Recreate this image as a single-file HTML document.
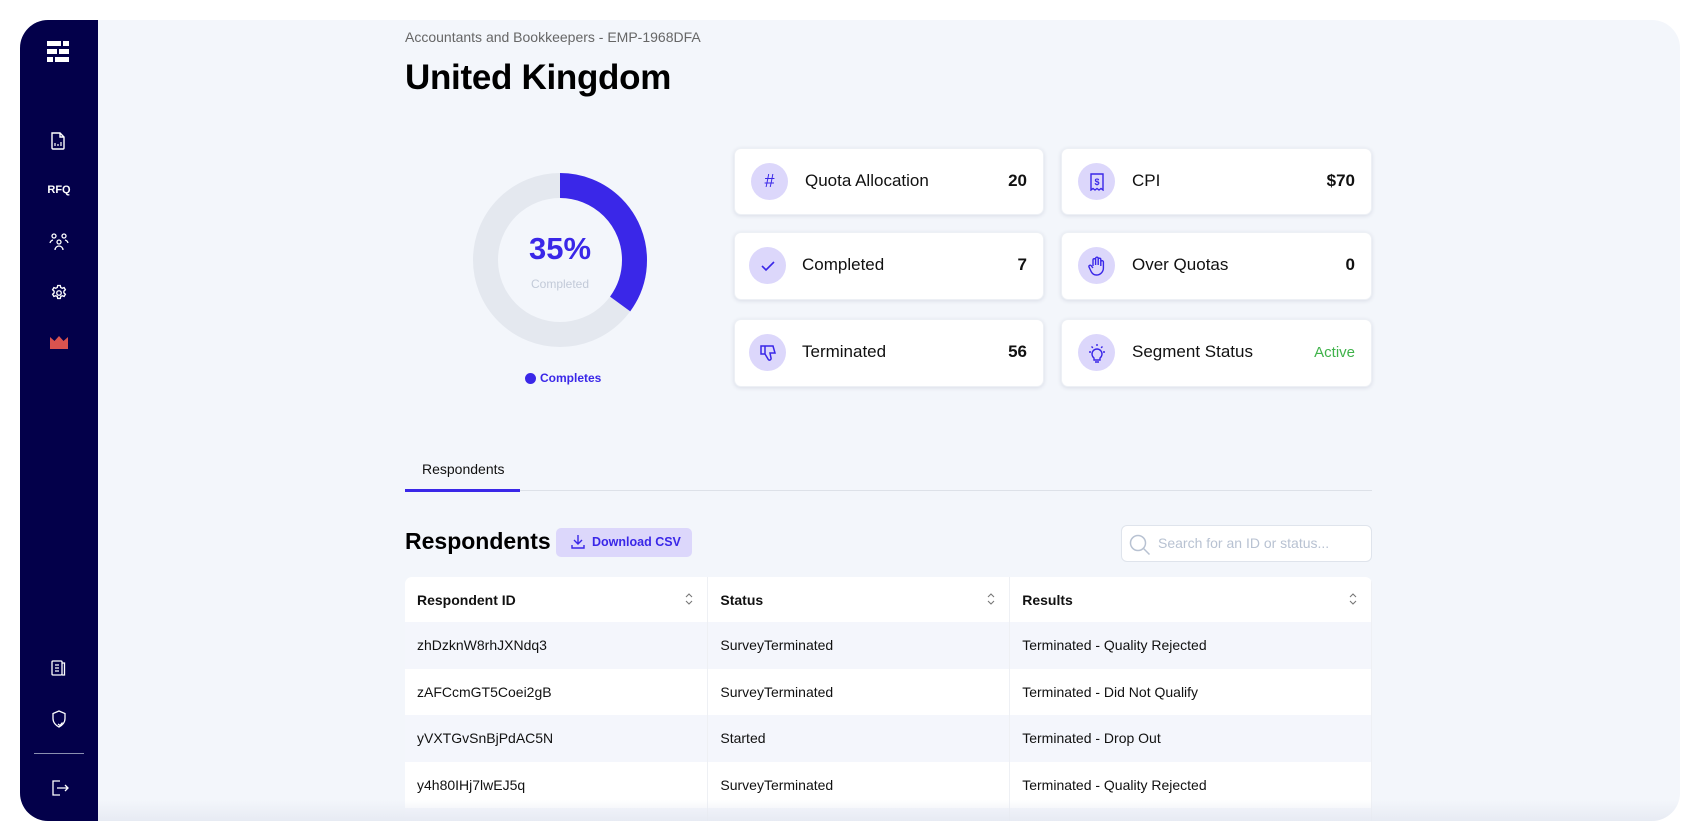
<!DOCTYPE html>
<html><head><meta charset="utf-8"><style>
*{box-sizing:border-box;margin:0;padding:0}
body{width:1700px;height:840px;background:#fff;font-family:"Liberation Sans",Arial,sans-serif;position:relative;overflow:hidden}
.frame{position:absolute;left:20px;top:20px;width:1660px;height:801px;border-radius:28px;overflow:hidden;background:#f3f6fb}
.side{position:absolute;left:0;top:0;width:78px;height:801px;background:#03004a}
.abs{position:absolute}
.card{position:absolute;background:#fff;border-radius:7px;box-shadow:0 1px 4px rgba(30,40,80,.12);border:1px solid #edf0f5}
.ic{position:absolute;left:16px;top:14px;width:37px;height:37px;border-radius:50%;background:#dcd7fb;display:flex;align-items:center;justify-content:center}
.lbl{position:absolute;left:70px;top:22px;font-size:17px;color:#111}
.val{position:absolute;right:16px;top:22px;font-size:17px;font-weight:bold;color:#111}
table{border-collapse:collapse;width:967px;background:#fff}
td,th{font-size:14px;color:#111;text-align:left;padding:0 12px;height:46.6px;border-right:1px solid #eef0f4}
th{height:45px;font-weight:bold;position:relative}
tr.l td{background:#f4f6fc}
.sort{position:absolute;right:14px;top:15px}
</style></head><body>
<div class="frame">
 <div class="side">
  <svg class="abs" style="left:27px;top:21px" width="22" height="21" viewBox="0 0 22 21" fill="#fff"><rect x="0" y="0" width="14" height="5"/><rect x="16" y="0" width="6" height="5"/><rect x="0" y="8" width="10" height="5"/><rect x="12" y="8" width="10" height="5"/><rect x="0" y="16" width="6" height="5"/><rect x="8" y="16" width="14" height="5"/></svg>
  <svg class="abs" style="left:30px;top:112px" width="16" height="18" viewBox="0 0 16 18" fill="none" stroke="#fff" stroke-width="1.4"><path d="M2 1h8l4 4v11a1 1 0 0 1-1 1H3a1 1 0 0 1-1-1z M10 1v4h4"/><path d="M5 14v-3M8 14v-2M11 14v-4" stroke-width="1.2"/></svg>
  <div class="abs" style="left:0;width:78px;top:164px;text-align:center;color:#fff;font-size:11px;font-weight:bold">RFQ</div>
  <svg class="abs" style="left:29px;top:213px" width="20" height="18" viewBox="0 0 20 18" fill="none" stroke="#fff" stroke-width="1.3"><circle cx="5" cy="3" r="2"/><circle cx="15" cy="3" r="2"/><circle cx="10" cy="9" r="2"/><path d="M1 10a4 4 0 0 1 3-3M19 10a4 4 0 0 0-3-3M6 17a4 4 0 0 1 8 0"/></svg>
  <svg class="abs" style="left:30px;top:264px" width="18" height="18" viewBox="0 0 24 24" fill="none" stroke="#fff" stroke-width="1.8"><circle cx="12" cy="12" r="3"/><path d="M10.3 2h3.4l.6 2.6 2 1.1 2.5-.9 1.7 2.9-2 1.8v2.3l2 1.8-1.7 2.9-2.5-.9-2 1.1-.6 2.6h-3.4l-.6-2.6-2-1.1-2.5.9-1.7-2.9 2-1.8V9.5l-2-1.8 1.7-2.9 2.5.9 2-1.1z"/></svg>
  <svg class="abs" style="left:30px;top:316px" width="18" height="13" viewBox="0 0 18 13" fill="#d9534f"><path d="M0 1l4.5 4L9 0l4.5 5L18 1v12H0z"/></svg>
  <svg class="abs" style="left:31px;top:640px" width="15" height="16" viewBox="0 0 15 16" fill="none" stroke="#fff" stroke-width="1.3"><rect x="1" y="1" width="10" height="14" rx="1"/><path d="M11 3h2.5v12H11M4 5h4M4 8h4M4 11h4"/></svg>
  <svg class="abs" style="left:31px;top:690px" width="16" height="18" viewBox="0 0 16 18" fill="none" stroke="#fff" stroke-width="1.3"><path d="M8 1l6 2.5v5c0 4-3 7-6 8.5-3-1.5-6-4.5-6-8.5v-5z"/><path d="M7 14l2 1.5 2.5-3"/></svg>
  <div class="abs" style="left:14px;top:733px;width:50px;height:1px;background:#8a8fb0"></div>
  <svg class="abs" style="left:31px;top:760px" width="18" height="16" viewBox="0 0 18 16" fill="none" stroke="#fff" stroke-width="1.3"><path d="M9 1H2v14h7M6 8h11M14 5l3 3-3 3"/></svg>
 </div>

 <div class="abs" style="left:385px;top:9px;font-size:14px;color:#666">Accountants and Bookkeepers - EMP-1968DFA</div>
 <div class="abs" style="left:385px;top:38px;font-size:35px;font-weight:bold;color:#000;letter-spacing:-.3px">United Kingdom</div>

 <svg class="abs" style="left:453px;top:153px" width="174" height="174" viewBox="0 0 174 174"><circle cx="87" cy="87" r="74.5" fill="none" stroke="#e4e8ef" stroke-width="25"/><circle cx="87" cy="87" r="74.5" fill="none" stroke="#3a27e8" stroke-width="25" stroke-dasharray="164 400" transform="rotate(-90 87 87)"/></svg>
 <div class="abs" style="left:480px;width:120px;top:211px;text-align:center;font-size:31px;font-weight:bold;color:#3a27e8">35%</div>
 <div class="abs" style="left:480px;width:120px;top:257px;text-align:center;font-size:12px;color:#c2cad8">Completed</div>
 <div class="abs" style="left:505px;top:353px;width:11px;height:11px;border-radius:50%;background:#3a27e8"></div>
 <div class="abs" style="left:520px;top:351px;font-size:12px;font-weight:bold;color:#3a27e8">Completes</div>

 <div class="card" style="left:714px;top:128px;width:310px;height:67px"><div class="ic"><span style="color:#3a27e8;font-size:18px">#</span></div><div class="lbl">Quota Allocation</div><div class="val">20</div></div>
 <div class="card" style="left:1041px;top:128px;width:311px;height:67px"><div class="ic"><svg width="16" height="18" viewBox="0 0 16 18" fill="none" stroke="#3a27e8" stroke-width="1.4"><path d="M2 1h12v16l-2-1.5-2 1.5-2-1.5-2 1.5-2-1.5-2 1.5z"/><text x="8" y="12" font-size="9" font-weight="bold" text-anchor="middle" fill="#3a27e8" stroke="none" font-family="Liberation Sans">$</text></svg></div><div class="lbl">CPI</div><div class="val">$70</div></div>
 <div class="card" style="left:714px;top:212px;width:310px;height:68px"><div class="ic" style="left:14px"><svg width="16" height="12" viewBox="0 0 16 12" fill="none" stroke="#3a27e8" stroke-width="1.6"><path d="M2 6l4 4 8-8"/></svg></div><div class="lbl" style="left:67px">Completed</div><div class="val">7</div></div>
 <div class="card" style="left:1041px;top:212px;width:311px;height:68px"><div class="ic"><svg width="18" height="20" viewBox="0 0 18 20" fill="none" stroke="#3a27e8" stroke-width="1.4"><path d="M5 10V4a1.3 1.3 0 0 1 2.6 0v5V2.5a1.3 1.3 0 0 1 2.6 0V9V3.5a1.3 1.3 0 0 1 2.6 0V10V6a1.3 1.3 0 0 1 2.6 0v6a7 7 0 0 1-7 7 6 6 0 0 1-5-3L1 11a1.3 1.3 0 0 1 2-1.5L5 12"/></svg></div><div class="lbl">Over Quotas</div><div class="val">0</div></div>
 <div class="card" style="left:714px;top:299px;width:310px;height:68px"><div class="ic" style="left:14px"><svg width="16" height="18" viewBox="0 0 16 18" fill="none" stroke="#3a27e8" stroke-width="1.5"><path d="M1 2h4v8H1zM5 2h8l2 7h-5l1 5a1.5 1.5 0 0 1-3 1L5 10"/></svg></div><div class="lbl" style="left:67px">Terminated</div><div class="val">56</div></div>
 <div class="card" style="left:1041px;top:299px;width:311px;height:68px"><div class="ic"><svg width="18" height="20" viewBox="0 0 18 20" fill="none" stroke="#3a27e8" stroke-width="1.4"><path d="M6 15a5 5 0 1 1 6 0v2H6zM7 19h4M9 1v2M1 9h2M15 9h2M3.5 3.5l1.4 1.4M14.5 3.5l-1.4 1.4"/></svg></div><div class="lbl">Segment Status</div><div class="val" style="font-weight:normal;color:#3fb24a;font-size:15px;top:24px">Active</div></div>

 <div class="abs" style="left:402px;top:441px;font-size:14px;color:#111">Respondents</div>
 <div class="abs" style="left:385px;top:470px;width:967px;height:1px;background:#dde1e8"></div>
 <div class="abs" style="left:385px;top:469px;width:115px;height:3px;background:#3a27e8"></div>

 <div class="abs" style="left:385px;top:508px;font-size:23px;font-weight:bold;color:#000">Respondents</div>
 <div class="abs" style="left:536px;top:508px;width:136px;height:29px;border-radius:5px;background:#dcd7fb;color:#3a27e8;font-size:12.5px;font-weight:bold;padding:7px 0 0 36px">Download CSV</div>
 <svg class="abs" style="left:551px;top:514px" width="14" height="15" viewBox="0 0 14 15" fill="none" stroke="#3a27e8" stroke-width="1.4"><path d="M7 1v9M3 6l4 4 4-4M1 11v3h12v-3"/></svg>
 <div class="abs" style="left:1101px;top:505px;width:251px;height:37px;border:1px solid #dfe4ec;border-radius:6px;background:#fff"></div>
 <svg class="abs" style="left:1109px;top:514px" width="22" height="22" viewBox="0 0 22 22" fill="none" stroke="#b8c2d2" stroke-width="1.5"><circle cx="9" cy="9" r="7.5"/><path d="M14.5 14.5l6 6"/></svg>
 <div class="abs" style="left:1138px;top:515px;font-size:14px;color:#b8c2d2">Search for an ID or status...</div>

 <div class="abs" style="left:385px;top:557px;border-radius:7px 7px 0 0;overflow:hidden">
 <table>
  <colgroup><col style="width:303px"><col style="width:302px"><col style="width:362px"></colgroup>
  <tr><th>Respondent ID<svg class="sort" width="8" height="14" viewBox="0 0 8 14" fill="none" stroke="#777" stroke-width="1.1"><path d="M1 5l3-3 3 3M1 9l3 3 3-3"/></svg></th><th>Status<svg class="sort" width="8" height="14" viewBox="0 0 8 14" fill="none" stroke="#777" stroke-width="1.1"><path d="M1 5l3-3 3 3M1 9l3 3 3-3"/></svg></th><th>Results<svg class="sort" width="8" height="14" viewBox="0 0 8 14" fill="none" stroke="#777" stroke-width="1.1"><path d="M1 5l3-3 3 3M1 9l3 3 3-3"/></svg></th></tr>
  <tr class="l"><td>zhDzknW8rhJXNdq3</td><td>SurveyTerminated</td><td>Terminated - Quality Rejected</td></tr>
  <tr><td>zAFCcmGT5Coei2gB</td><td>SurveyTerminated</td><td>Terminated - Did Not Qualify</td></tr>
  <tr class="l"><td>yVXTGvSnBjPdAC5N</td><td>Started</td><td>Terminated - Drop Out</td></tr>
  <tr><td>y4h80IHj7lwEJ5q</td><td>SurveyTerminated</td><td>Terminated - Quality Rejected</td></tr>
  <tr class="l"><td></td><td></td><td></td></tr>
 </table>
 </div>
 <div class="abs" style="left:78px;top:780px;width:1582px;height:21px;background:linear-gradient(rgba(236,239,246,0),rgba(228,232,241,.8))"></div>
</div>
</body></html>
